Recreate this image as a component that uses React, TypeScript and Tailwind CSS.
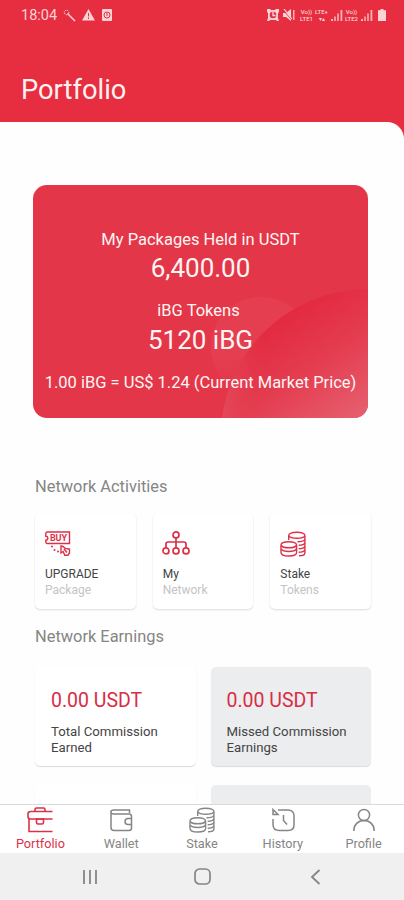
import React from 'react';

type IconProps = { className?: string };

const CoinsIcon = ({ className }: IconProps) => (
  <svg className={className} viewBox="0 0 26 26" fill="none" stroke="currentColor" strokeWidth="1.4">
    <path d="M8.700 9V4.500C8.700 2.600 12 1.200 16.800 1.200S24.900 2.600 24.900 4.500V22c0 1.800-2.900 2.800-5.900 2.800" />
    <path d="M8.900 4.800c.8 1.500 4 2.400 7.900 2.400s7.300-.9 8.100-2.400M17.500 10.800c3.700 0 6.600-.9 7.400-2.300M18.700 14.300c3.200-.1 5.500-.9 6.200-2.200M18.700 17.800c3.200-.1 5.500-.9 6.200-2.200M18.700 21.300c3.200-.1 5.500-.9 6.200-2.200" />
    <path d="M1 14.200c0-2.200 3-3.500 7.800-3.500s7.800 1.300 7.800 3.500v7.300c0 2.200-3 3.500-7.800 3.500S1 23.700 1 21.500z" />
    <path d="M1.200 14.500c1 1.500 4 2.300 7.600 2.300s6.600-.8 7.600-2.300M1.200 18.200c1 1.500 4 2.300 7.600 2.300s6.600-.8 7.600-2.300" />
  </svg>
);

const BuyIcon = () => (
  <svg className="block size-[26px]" viewBox="0 0 26 26" fill="none" stroke="currentColor" strokeWidth="1.4">
    <path d="M2.300 12.500A1.500 1.500 0 0 1 .8 11V9.200a2 2 0 0 0 0-4V2.500A1.500 1.500 0 0 1 2.300 1H24.500v11.500z" />
    <text x="5" y="10" fontSize="9" fontWeight="700" fontFamily="Roboto, sans-serif" fill="currentColor" stroke="none" textLength="17">BUY</text>
    <g fill="currentColor" stroke="none">
      <circle cx="7" cy="15.500" r="1" />
      <circle cx="9.500" cy="19" r="1" />
      <circle cx="13" cy="20.500" r="1" />
    </g>
    <path d="M16 15v7l2.200-1.500 1.500 3.700h3.300l1.500-2.500v-3.500l-4.200-.8L18 15.500zM19 18l3 3.500" />
  </svg>
);

const NetworkIcon = () => (
  <svg className="-ml-px block h-6 w-7" viewBox="0 0 28 24" fill="none" stroke="currentColor" strokeWidth="1.7">
    <circle cx="14" cy="3.900" r="3" />
    <path d="M14 7v9.500M4 16.500V13q0-2 2-2h16q2 0 2 2v3.500" />
    <circle cx="4" cy="19.900" r="3" />
    <circle cx="14" cy="19.900" r="3" />
    <circle cx="24" cy="19.900" r="3" />
  </svg>
);

const BriefcaseIcon = () => (
  <svg className="h-[26px] w-[26px]" viewBox="0 0 26 26" fill="none" stroke="currentColor" strokeWidth="1.600">
    <path d="M8 4.300V2.500Q8 1 9.500 1h7Q18 1 18 2.500v1.800M25.500 4.500H3.500Q1 4.500 1 6.800v3Q1 12 3.500 12h22M2 12v12.500h23.500" />
    <path d="M9.500 12h7v3.500q0 1.500-1.500 1.500h-4q-1.500 0-1.500-1.500z" />
  </svg>
);

const WalletIcon = () => (
  <svg className="h-[26px] w-[26px]" viewBox="0 0 26 26" fill="none" stroke="currentColor" strokeWidth="1.500">
    <path d="M21.500 6V3H6C1.800 3 1.800 7 6 7h15q2.500 0 2.500 2.500V21q0 2.500-2.500 2.500H6q-3 0-3-3V5" />
    <path d="M23.500 11.500H20a3 3 0 0 0 0 6h3.500" />
  </svg>
);

const HistoryIcon = () => (
  <svg className="h-[26px] w-[26px]" viewBox="0 0 26 26" fill="none" stroke="currentColor" strokeWidth="1.500">
    <path d="M8 3h10.500q5.500.5 5.500 6v9q0 5.500-6 5.500H9.500Q3 23.500 3 17.500V12" />
    <path d="M3 2.500v5h5zM13.500 8v5.500l3.500 4" />
  </svg>
);

const ProfileIcon = () => (
  <svg className="h-[26px] w-[26px]" viewBox="0 0 26 26" fill="none" stroke="currentColor" strokeWidth="1.500">
    <circle cx="13" cy="8" r="5.600" />
    <path d="M2.800 24c0-6.500 4.200-10.400 10.200-10.400S23.200 17.500 23.200 24" />
  </svg>
);

const Signal = () => (
  <svg className="h-[11px] w-3" viewBox="0 0 12 11" fill="currentColor">
    <path d="M0 9h2v2H0zM3.200 6.500h1.600V11H3.200zM6.200 3.500h1.600V11H6.200zM9.500 0h1.800v11H9.500z" opacity=".8" />
  </svg>
);

const Carrier = ({ top, bottom }: { top: string; bottom: string }) => (
  <span className="flex flex-col items-center text-[6px] leading-[7px] font-medium whitespace-nowrap">
    <span>{top}</span>
    <span>{bottom}</span>
  </span>
);

const StatusBar = () => (
  <div className="flex h-[30px] items-center justify-between pr-[18px] pl-[21px] text-[#fbd3d6]">
    <div className="flex items-center">
      <span className="w-[36px] pt-[2px] text-[14.500px] leading-none">18:04</span>
      <svg className="ml-[6px] size-[13px]" viewBox="0 0 13 13" fill="none" stroke="currentColor">
        <circle cx="3.500" cy="3.500" r="2.300" strokeDasharray="1.500 1" />
        <path d="M4.500 4.500L12 12" strokeWidth="1.500" />
      </svg>
      <svg className="ml-[6px] h-3 w-[13px]" viewBox="0 0 13 12">
        <path d="M6.500 0L13 11.500H0z" fill="currentColor" />
        <path d="M6.500 4v3.500M6.500 8.500v1.500" stroke="#e62e40" />
      </svg>
      <svg className="ml-[7px] h-3 w-[10px]" viewBox="0 0 10 12">
        <rect width="10" height="12" rx="1" fill="currentColor" />
        <circle cx="5" cy="6" r="3" fill="none" stroke="#e62e40" />
        <path d="M5 4v3" stroke="#e62e40" />
      </svg>
    </div>
    <div className="flex items-center">
      <svg className="mr-[4px] h-3 w-3" viewBox="0 0 12 12">
        <path d="M0 0h3l1 1h4l1-1h3v3l-1 1v5l1 3h-2L9 11H3l-1 1H0l1-3V4L0 3z" fill="currentColor" />
        <circle cx="6" cy="6" r="3.300" fill="#e62e40" />
        <path d="M6 3v3.500h2.500" fill="none" stroke="currentColor" strokeWidth="1.300" />
      </svg>
      <svg className="mr-[4px] h-3 w-3" viewBox="0 0 12 12">
        <path d="M0 4h3l5-4v12L3 8H0z" fill="currentColor" />
        <path d="M0 1l9 10" stroke="#e62e40" strokeWidth="1" />
        <path d="M1 0l8 10M10.800 1v10" stroke="currentColor" strokeWidth="1.200" />
      </svg>
      <span className="w-[15px]"><Carrier top="Vo))" bottom="LTE1" /></span>
      <span className="mr-[2px] w-[15px]"><Carrier top="LTE+" bottom="▾▴" /></span>
      <Signal />
      <span className="ml-px mr-[2px] w-[15px]"><Carrier top="Vo))" bottom="LTE2" /></span>
      <Signal />
      <svg className="ml-[5px] h-3 w-[8px]" viewBox="0 0 8 12" fill="currentColor">
        <path d="M2.500 0h3v1.200H8V12H0V1.200h2.500z" />
      </svg>
    </div>
  </div>
);

const BalanceCard = () => (
  <section className="relative mr-[36px] ml-[33px] h-[233px] overflow-hidden rounded-[14px] bg-[#e43649] text-center text-[#fff5f3]">
    <svg className="absolute inset-0 h-full w-full" viewBox="0 0 335 233" aria-hidden="true">
      <defs>
        <linearGradient id="dome" gradientUnits="userSpaceOnUse" x1="245" y1="130" x2="325" y2="245">
          <stop offset="0" stopColor="#e3283f" />
          <stop offset=".45" stopColor="#e43d50" />
          <stop offset="1" stopColor="#e66473" />
        </linearGradient>
        <linearGradient id="domeEdge" x1="0" y1="0" x2="1" y2="0">
          <stop offset="0" stopColor="#e5485a" />
          <stop offset=".15" stopColor="#e43a4d" stopOpacity="0" />
        </linearGradient>
        <linearGradient id="bubble" x1="0" y1="0" x2="0" y2="1">
          <stop offset="0" stopColor="#fff" stopOpacity=".04" />
          <stop offset=".6" stopColor="#fff" stopOpacity=".04" />
          <stop offset=".95" stopColor="#fff" stopOpacity="0" />
        </linearGradient>
      </defs>
      <circle cx="228" cy="162" r="50" fill="url(#bubble)" />
      <circle cx="335" cy="251" r="147" fill="url(#dome)" />
      <circle cx="335" cy="251" r="147" fill="url(#domeEdge)" />
    </svg>
    <div className="relative flex flex-col items-center pt-[44px] whitespace-nowrap">
      <p className="text-[16.500px] leading-[22px]">My Packages Held in USDT</p>
      <p className="-mt-px text-[26px] leading-[36px]">6,400.00</p>
      <p className="mt-[14px] mr-[4px] text-[16.500px] leading-[22px]">iBG Tokens</p>
      <p className="text-[26px] leading-[36px]">5120 iBG</p>
      <p className="mt-[14px] text-[16.500px] leading-[22px]">1.00 iBG = US$ 1.24 (Current Market Price)</p>
    </div>
  </section>
);

const activities = [
  { icon: <BuyIcon />, title: 'UPGRADE', sub: 'Package' },
  { icon: <NetworkIcon />, title: 'My', sub: 'Network' },
  { icon: <CoinsIcon className="block size-[26px]" />, title: 'Stake', sub: 'Tokens' },
];

const earnings = [
  { amount: '0.00 USDT', first: 'Total Commission', second: 'Earned', muted: false },
  { amount: '0.00 USDT', first: 'Missed Commission', second: 'Earnings', muted: true },
];

const tabs = [
  { icon: <BriefcaseIcon />, label: 'Portfolio', active: true },
  { icon: <WalletIcon />, label: 'Wallet', active: false },
  { icon: <CoinsIcon className="size-[26px]" />, label: 'Stake', active: false },
  { icon: <HistoryIcon />, label: 'History', active: false },
  { icon: <ProfileIcon />, label: 'Profile', active: false },
];

export default function App() {
  return (
    <div className="flex h-[900px] w-[404px] flex-col overflow-hidden bg-[#e62e40] font-['Roboto',sans-serif]">
      <header className="h-[122px] shrink-0">
        <StatusBar />
        <h1 className="mt-[44px] ml-[21px] text-[27.300px] leading-[32px] text-[#fff1f0]">Portfolio</h1>
      </header>

      <main className="min-h-0 flex-1 overflow-hidden rounded-tr-[17px] bg-[#fefefe] pt-[63px]">
        <BalanceCard />

        <h2 className="mt-[58px] ml-[35px] text-[16.400px] leading-[22px] text-[#858585]">Network Activities</h2>
        <div className="mt-[15px] mr-[33px] ml-[35px] grid grid-cols-3 gap-[17px]">
          {activities.map((a) => (
            <div key={a.title} className="h-[96px] rounded-[5px] bg-white pt-[18px] pl-[10px] shadow-[0_1px_2px_rgba(0,0,0,0.14)]">
              <div className="h-[26px] text-[#dc3148]">{a.icon}</div>
              <p className="mt-[9px] text-[12px] leading-[16px] text-[#444]">{a.title}</p>
              <p className="text-[12px] leading-[16px] text-[#c4c4c4]">{a.sub}</p>
            </div>
          ))}
        </div>

        <h2 className="mt-[17px] ml-[35px] text-[16.400px] leading-[22px] text-[#858585]">Network Earnings</h2>
        <div className="mt-[19px] mr-[33px] ml-[35px] grid grid-cols-2 gap-x-[15px] gap-y-[19px]">
          {earnings.map((e) => (
            <div
              key={e.first}
              className={`h-[99px] rounded-[5px] pt-[22px] pl-4 shadow-[0_1px_1px_rgba(0,0,0,0.14)] ${e.muted ? 'bg-[#ebedee]' : 'bg-white'}`}
            >
              <p className="text-[19.500px] leading-[24px] text-[#d92c45]">{e.amount}</p>
              <p className="mt-[11px] text-[13.200px] leading-[15.500px] text-[#444]">
                {e.first}
                <br />
                {e.second}
              </p>
            </div>
          ))}
          <div className="h-[99px] rounded-[5px] bg-white shadow-[0_1px_1px_rgba(0,0,0,0.14)]" />
          <div className="h-[99px] rounded-[5px] bg-[#ebedee]" />
        </div>
      </main>

      <nav className="grid h-[49px] shrink-0 grid-cols-5 border-t border-[#d9dadb] bg-white">
        {tabs.map((t) => (
          <div key={t.label} className={`flex flex-col items-center pt-[2px] ${t.active ? 'text-[#dc3148]' : 'text-[#858585]'}`}>
            {t.icon}
            <span className="mt-[3px] text-[12.700px] leading-[15px]">{t.label}</span>
          </div>
        ))}
      </nav>

      <footer className="flex h-[47px] shrink-0 items-center bg-[#f0f0f0] text-[#858585]">
        <svg className="ml-[82px] h-4 w-4" viewBox="0 0 16 16" fill="none" stroke="currentColor" strokeWidth="1.800">
          <path d="M2 1v14M8 1v14M14 1v14" />
        </svg>
        <svg className="ml-[96px] h-[17px] w-[17px]" viewBox="0 0 17 17" fill="none" stroke="currentColor" strokeWidth="1.700">
          <rect x="1" y="1" width="15" height="15" rx="4.500" />
        </svg>
        <svg className="ml-[98px] h-4 w-[14px]" viewBox="0 0 14 16" fill="none" stroke="currentColor" strokeWidth="1.800">
          <path d="M10.500 1L3 8l7.500 7" />
        </svg>
      </footer>
    </div>
  );
}
